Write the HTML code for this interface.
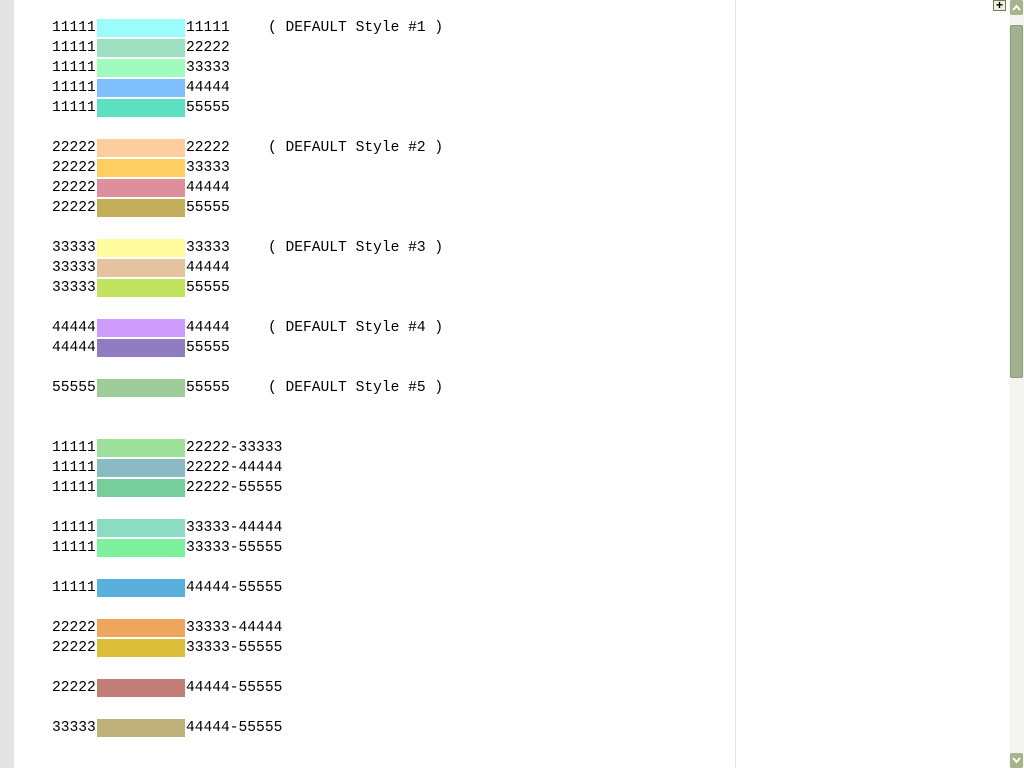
<!DOCTYPE html>
<html><head><style>
body{margin:0;width:1024px;height:768px;background:#fff;position:relative;overflow:hidden;font-family:"Liberation Mono","DejaVu Sans Mono",monospace;font-size:14.6px;color:#000}
.strip{position:absolute;left:0;top:0;width:14px;height:768px;background:#e4e4e4}
.vl{position:absolute;left:735px;top:0;width:1px;height:768px;background:#e3e3e3}
.r{position:absolute;height:20px;line-height:20px;white-space:pre}
.a{left:52px}
.b{position:absolute;left:97px;width:88px;height:18px}
.c{left:186px}
.d{left:268px}
.sb{position:absolute;left:1009px;top:0;width:15px;height:768px;background:#f4f4f0}
</style></head><body>
<div class="strip"></div><div class="vl"></div>
<div id="c"></div>
<div class="sb">
<div style="position:absolute;left:1px;top:0;width:13px;height:15px;background:#a6b38e;border-radius:2px"><svg width="13" height="15"><path d="M3 10 L6.5 6 L10 10" stroke="#fff" stroke-width="2" fill="none"/></svg></div>
<div style="position:absolute;left:1px;top:25px;width:13px;height:353px;background:#a4b190;border:1px solid #8d9b77;box-sizing:border-box;border-radius:2px"></div>
<div style="position:absolute;left:1px;top:753px;width:13px;height:15px;background:#a6b38e;border-radius:2px"><svg width="13" height="15"><path d="M3 5 L6.5 9 L10 5" stroke="#fff" stroke-width="2" fill="none"/></svg></div>
</div>
<div style="position:absolute;left:993px;top:0;width:13px;height:11px;border:1px solid #7a7a5a;background:#f0f0e0;box-sizing:border-box;font:bold 12px/9px 'Liberation Sans';text-align:center">+</div>
<script>
var rows=[[0,"11111","#9cfcfc","11111",1],[1,"11111","#9ee0c2","22222"],[2,"11111","#9ffcbe","33333"],[3,"11111","#80bffd","44444"],[4,"11111","#5de0c2","55555"],
[6,"22222","#fdcd9e","22222",2],[7,"22222","#fdce62","33333"],[8,"22222","#df8f9c","44444"],[9,"22222","#c4ae5b","55555"],
[11,"33333","#fffc9e","33333",3],[12,"33333","#e4c39e","44444"],[13,"33333","#c2e35e","55555"],
[15,"44444","#cd9cfc","44444",4],[16,"44444","#8f7dc2","55555"],
[18,"55555","#9dcd98","55555",5],
[21,"11111","#9de09c","22222-33333"],[22,"11111","#8abac2","22222-44444"],[23,"11111","#78cd9c","22222-55555"],
[25,"11111","#8bdcc2","33333-44444"],[26,"11111","#7df09e","33333-55555"],
[28,"11111","#5ab0dc","44444-55555"],
[30,"22222","#eea65e","33333-44444"],[31,"22222","#dcbe3a","33333-55555"],
[33,"22222","#c17e78","44444-55555"],
[35,"33333","#beb078","44444-55555"]];
var h="";rows.forEach(function(r){var y=18+20*r[0];
h+='<div class="r a" style="top:'+y+'px">'+r[1]+'</div><div class="b" style="top:'+(y+1)+'px;background:'+r[2]+'"></div><div class="r c" style="top:'+y+'px">'+r[3]+'</div>';
if(r[4])h+='<div class="r d" style="top:'+y+'px">( DEFAULT Style #'+r[4]+' )</div>';});
document.getElementById("c").innerHTML=h;
</script>
</body></html>
